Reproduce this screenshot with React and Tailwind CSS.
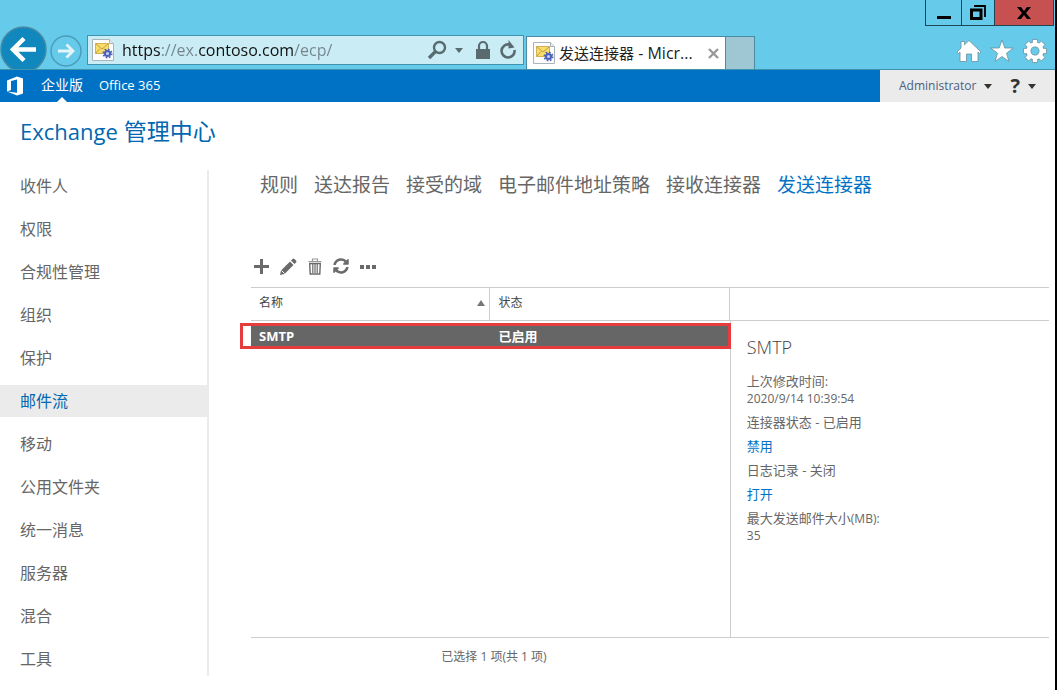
import React, { useState } from 'react';
import { FaSyncAlt } from 'react-icons/fa';

const sideItems = ['收件人', '权限', '合规性管理', '组织', '保护', '邮件流', '移动', '公用文件夹', '统一消息', '服务器', '混合', '工具'];
const tabs = ['规则', '送达报告', '接受的域', '电子邮件地址策略', '接收连接器', '发送连接器'];
const connectors = [{ id: 1, name: 'SMTP', status: '已启用' }];
const gearAngles = [0, 45, 90, 135, 180, 225, 270, 315];

const Favicon = () => (
    <svg width="22" height="24" viewBox="0 0 22 24" className="shrink-0">
        <path d="M.5 1.5h17l4 4v17H.5z" fill="#fdfdfd" stroke="#a9b4ba" />
        <path d="M17.5 1.5v4h4" fill="#e9eef0" stroke="#a9b4ba" />
        <rect x="3.5" y="5.5" width="13" height="10" fill="#f8dc6c" stroke="#d3b255" />
        <path d="M4 6l6 5 6-5M4 15l4-4.5M16 15l-4-4.5" fill="none" stroke="#b98f35" strokeWidth=".8" />
        <circle cx="15.5" cy="15.5" r="2.6" fill="#c5cef0" stroke="#4a62b8" strokeWidth="2" />
        <circle cx="15.5" cy="15.5" r="4.2" fill="none" stroke="#4a62b8" strokeWidth="1.6" strokeDasharray="1.65 1.65" />
    </svg>
);

const Caret = ({ className }) => (
    <svg width="8" height="5" viewBox="0 0 8 5" className={className}>
        <path d="M0 0h8L4 5z" fill="currentColor" />
    </svg>
);

const HomeIcon = () => (
    <svg width="26" height="24" viewBox="0 0 26 24">
        <path d="M13 1.5L8.500 5.800V2.500H5v6.700L1 13l1.500 1.500L4 13v9.500h6.500V15h5v7.500H22V13l1.500 1.500L25 13z" fill="#fff" stroke="#6d8f9c" strokeWidth=".8" />
    </svg>
);

const StarIcon = () => (
    <svg width="24" height="24" viewBox="0 0 24 24">
        <path d="M12 1l2.8 8h8.500l-6.800 5.200 2.500 8.300-7-5-7 5 2.500-8.300L.7 9h8.500z" fill="#fff" stroke="#6d8f9c" strokeWidth=".8" />
    </svg>
);

const GearIcon = () => (
    <svg width="26" height="26" viewBox="0 0 26 26">
        <circle cx="13" cy="13" r="6.5" fill="none" stroke="#6d8f9c" strokeWidth="5.500" />
        {gearAngles.map((deg) => (
            <path key={deg} d="M10.2 6l.3-4.500h5l.3 4.500z" transform={`rotate(${deg} 13 13)`} fill="#fff" stroke="#6d8f9c" strokeWidth=".8" />
        ))}
        <circle cx="13" cy="13" r="6.5" fill="none" stroke="#fff" strokeWidth="4" />
    </svg>
);

const WindowControls = () => (
    <div className="flex h-[26px] border-b border-l border-[#1f4654] mr-px">
        <button aria-label="最小化" className="w-9 border-r border-[#1f4654] flex items-center justify-center">
            <svg width="16" height="16" viewBox="0 0 16 16"><path d="M1 11h14v3H1z" fill="#000" /></svg>
        </button>
        <button aria-label="还原" className="w-[33px] border-r border-[#1f4654] flex items-center justify-center">
            <svg width="16" height="16" viewBox="0 0 16 16" fill="none" stroke="#000">
                <path d="M4 1h11v11" strokeWidth="1.8" />
                <path d="M1.5 5h9.500v8.500H1.500z" strokeWidth="3" />
            </svg>
        </button>
        <button aria-label="关闭" className="w-[59px] bg-[#c75050] border-r border-[#1f4654] flex items-center justify-center">
            <svg width="14" height="12" viewBox="0 0 14 12"><path d="M0 0h4l3 4 3-4h4L9 6l5 6h-4L7 8l-3 4H0l5-6z" fill="#000" /></svg>
        </button>
    </div>
);

const AddressBar = () => (
    <div className="flex items-center h-[30px] w-[437px] mt-[3px] pl-1 pr-[6px] bg-[#c9ecf5] border border-[#3f93ae]">
        <Favicon />
        <input
            type="text"
            aria-label="地址"
            defaultValue="https://ex.contoso.com/ecp/"
            className="flex-1 min-w-0 ml-2 text-base outline-none text-transparent bg-clip-text bg-[linear-gradient(90deg,#111_38px,#75858b_38px,#75858b_75px,#111_75px,#111_172px,#75858b_172px)]"
        />
        <button aria-label="搜索" className="text-[#5a6b70]">
            <svg width="20" height="20" viewBox="0 0 20 20" fill="none" stroke="currentColor">
                <circle cx="12.5" cy="7.5" r="5.5" strokeWidth="2.4" />
                <path d="M8.5 11.5L2 18" strokeWidth="3.4" />
            </svg>
        </button>
        <button aria-label="搜索选项" className="px-2 text-[#5a6b70]"><Caret /></button>
        <svg width="16" height="20" viewBox="0 0 16 20" className="mx-1 text-[#5a6b70]">
            <path d="M1 9h14v10H1z" fill="currentColor" />
            <path d="M4 9V6a4 4 0 0 1 8 0v3" fill="none" stroke="currentColor" strokeWidth="2.2" />
        </svg>
        <button aria-label="刷新" className="ml-1 text-[#5a6b70]">
            <svg width="18" height="20" viewBox="0 0 18 20">
                <path d="M10 4.5A6.500 6.500 0 1 0 15.500 10" fill="none" stroke="currentColor" strokeWidth="2.6" />
                <path d="M9.5 0v8.500L15.500 7.500z" fill="currentColor" />
            </svg>
        </button>
    </div>
);

const BrowserChrome = () => (
    <header className="bg-[#66caea]">
        <div className="flex justify-end h-8">
            <WindowControls />
        </div>
        <div className="flex h-[38px] border-b border-[#3f93ae]">
            {/* the back button runs above its row, into the title strip */}
            <div className="relative w-12 shrink-0">
                <button aria-label="后退" className="absolute left-0 bottom-0 w-[47px] h-[43px] overflow-hidden">
                    <svg width="47" height="47" viewBox="0 0 47 47">
                        <circle cx="23.5" cy="23.5" r="22.5" fill="#1088bd" stroke="#4a8ba3" strokeWidth="1.5" />
                        <path d="M36 23.5H14M24 12.500L13 23.500l11 11" fill="none" stroke="#fff" strokeWidth="4.5" />
                    </svg>
                </button>
            </div>
            <button aria-label="前进" className="w-9 shrink-0 flex items-center justify-center mr-[3px]">
                <svg width="32" height="32" viewBox="0 0 32 32" fill="none">
                    <circle cx="16" cy="16" r="15" stroke="#4a9bb6" strokeWidth="1.4" />
                    <path d="M8 16h15M16.500 9.500L23 16l-6.500 6.500" stroke="#e4f5fa" strokeWidth="2.8" />
                </svg>
            </button>
            <AddressBar />
            <div className="flex items-center gap-1 w-[200px] mt-1 ml-[2px] pl-[6px] pr-[6px] bg-white border border-b-0 border-[#4a8ba3]">
                <Favicon />
                <span className="flex-1 text-[15px] whitespace-nowrap text-[#222]">发送连接器<span className="text-base"> - Micr...</span></span>
                <button aria-label="关闭选项卡" className="text-[#999]">
                    <svg width="11" height="11" viewBox="0 0 11 11"><path d="M1 1l9 9M10 1l-9 9" stroke="currentColor" strokeWidth="2.4" /></svg>
                </button>
            </div>
            <button aria-label="新建选项卡" className="w-[29px] mt-1 bg-[#9fc6d3] border border-l-0 border-b-0 border-[#4a8ba3]" />
            <div className="ml-auto flex items-center gap-2 pr-[7px]">
                <button aria-label="主页"><HomeIcon /></button>
                <button aria-label="收藏夹"><StarIcon /></button>
                <button aria-label="工具栏"><GearIcon /></button>
            </div>
        </div>
    </header>
);

const SuiteBar = () => (
    <nav className="flex h-8 bg-[#0072c6] text-white text-sm">
        <svg width="16" height="20" viewBox="0 0 16 20" className="mt-[6px] ml-[7px]">
            <path d="M0 4.5L10 .5l6 2v15l-6 2-10-4 10 1.200V3.500L4 5v9L0 15.500z" fill="#fff" />
        </svg>
        <a href="#enterprise" className="relative ml-[18px] leading-[30px]">
            企业版
            <svg width="10" height="5" viewBox="0 0 10 5" className="absolute bottom-0 left-4"><path d="M0 5l5-5 5 5z" fill="#fff" /></svg>
        </a>
        <a href="#office" className="ml-4 leading-[30px] text-[13px]">Office 365</a>
        <div className="ml-auto w-[175px] flex items-center pl-[19px] bg-[#ebebeb] text-[#4a6080]">
            <button className="flex items-center gap-2 text-xs">Administrator <Caret className="text-[#333]" /></button>
            <button aria-label="帮助" className="ml-[18px] flex items-center gap-2 text-xl leading-7 font-bold text-[#333]">? <Caret /></button>
        </div>
    </nav>
);

const Toolbar = () => (
    <div className="flex items-center gap-[10px] h-[38px] mb-[2px] mt-[47px] pl-[2px] text-[#6a6a6a]">
        <button aria-label="新建">
            <svg width="17" height="17" viewBox="0 0 17 17"><path d="M8.5 1v15M1 8.500h15" stroke="currentColor" strokeWidth="3" /></svg>
        </button>
        <button aria-label="编辑">
            <svg width="17" height="17" viewBox="0 0 17 17" fill="currentColor">
                <path d="M0 17l1-4.500 9-9 3.500 3.500-9 9zM11 2.500L12.500 1q1-1 2 0l1.500 1.500q1 1 0 2L14.500 6z" />
                <path d="M1.5 12.500l3 3" stroke="#fff" strokeWidth="1" />
            </svg>
        </button>
        <button aria-label="删除">
            <svg width="16" height="17" viewBox="0 0 16 17" fill="none" stroke="currentColor">
                <path d="M1.5 3.500h13M5.500 3V1h5v2" stroke="#999" strokeWidth="1.2" />
                <path d="M2.7 5.500h10.600L12.800 16H3.200z" strokeWidth="1.4" />
                <path d="M5.8 6v9M8 6v9M10.200 6v9" strokeWidth="1.2" />
            </svg>
        </button>
        <button aria-label="刷新列表"><FaSyncAlt size={16} /></button>
        <button aria-label="更多">
            <svg width="17" height="17" viewBox="0 0 17 17"><path d="M1 7h4v4H1zM7 7h4v4H7zM13 7h4v4h-4z" fill="currentColor" /></svg>
        </button>
    </div>
);

const ConnectorTable = () => (
    <div className="relative w-3/5">
        <table className="w-full table-fixed border-separate border-spacing-0 text-left">
            <thead>
                <tr className="h-[34px] text-xs text-[#444]">
                    <th className="w-1/2 border-y border-r border-[#ccc] pl-2 pr-1 pb-[2px] font-normal">
                        <div className="flex items-center justify-between">
                            名称
                            <svg width="8" height="6" viewBox="0 0 8 6"><path d="M0 6l4-6 4 6z" fill="#777" /></svg>
                        </div>
                    </th>
                    <th className="w-1/2 border-y border-r border-[#ccc] pl-2 pb-[2px] font-normal">状态</th>
                </tr>
            </thead>
            <tbody>
                {connectors.map((c) => (
                    <tr key={c.id} className="h-7 text-[13px] font-bold text-white">
                        <td className="border-t-2 border-white bg-[#666] pl-2 pt-[2px]">{c.name}</td>
                        <td className="border-t-2 border-white bg-[#666] pl-2 pt-[2px]">{c.status}</td>
                    </tr>
                ))}
            </tbody>
        </table>
        {/* highlight frame around the selected row */}
        <div className="absolute top-9 -left-[11px] -right-[1px] h-[26px] border-3 border-[#e53d3d] pointer-events-none" />
    </div>
);

const Details = () => (
    <aside className="flex flex-col w-2/5">
        <div className="h-[34px] border-y border-[#ccc]" />
        <div className="flex-1 border-l border-[#ccc] pl-4 pt-[14px] text-[13px] leading-[17px] text-[#666]">
            <h2 className="text-lg leading-6 font-light text-[#444] mb-[14px]">SMTP</h2>
            <dl className="flex flex-col gap-[7px]">
                <div><dt>上次修改时间:</dt><dd className="text-xs leading-[17px]">2020/9/14 10:39:54</dd></div>
                <dd>连接器状态 - 已启用</dd>
                <dd><a href="#disable" className="text-[#0072c6]">禁用</a></dd>
                <dd>日志记录 - 关闭</dd>
                <dd><a href="#enable" className="text-[#0072c6]">打开</a></dd>
                <div><dt>最大发送邮件大小<span className="text-xs leading-[17px]">(MB):</span></dt><dd className="text-xs leading-[17px]">35</dd></div>
            </dl>
        </div>
    </aside>
);

const App = () => {
    const [section, setSection] = useState('邮件流');
    const [tab, setTab] = useState('发送连接器');

    return (
        <div className="min-h-screen flex flex-col bg-white border-r-2 border-black font-['Open_Sans','Noto_Sans_CJK_SC',sans-serif]">
            <BrowserChrome />
            <SuiteBar />
            <h1 className="h-[68px] pl-5 pt-[13px] text-[23px] leading-8 text-[#0067b0]"><span className="text-[22px]">Exchange</span> 管理中心</h1>
            <div className="flex-1 flex pb-[14px]">
                <nav className="w-[209px] shrink-0 flex flex-col gap-[11px] border-r-2 border-[#ebebeb]">
                    {sideItems.map((item) => (
                        <a
                            key={item}
                            href="#section"
                            onClick={() => setSection(item)}
                            className={`h-8 pl-5 leading-8 text-base ${item === section ? 'bg-[#ebebeb] text-[#0067b0]' : 'text-[#666]'}`}
                        >
                            {item}
                        </a>
                    ))}
                </nav>
                <main className="flex-1 flex flex-col pl-[42px] pr-[6px]">
                    <div className="flex gap-4 pl-[9px] text-[19px] leading-[30px] text-[#666]">
                        {tabs.map((t) => (
                            <a key={t} href="#tab" onClick={() => setTab(t)} className={t === tab ? 'text-[#0072c6]' : ''}>{t}</a>
                        ))}
                    </div>
                    <Toolbar />
                    <div className="flex-1 flex border-b border-[#ccc]">
                        <ConnectorTable />
                        <Details />
                    </div>
                    <p className="h-[38px] w-[486px] leading-[38px] text-center text-xs text-[#666]">已选择 1 项(共 1 项)</p>
                </main>
            </div>
        </div>
    );
};

export default App;
